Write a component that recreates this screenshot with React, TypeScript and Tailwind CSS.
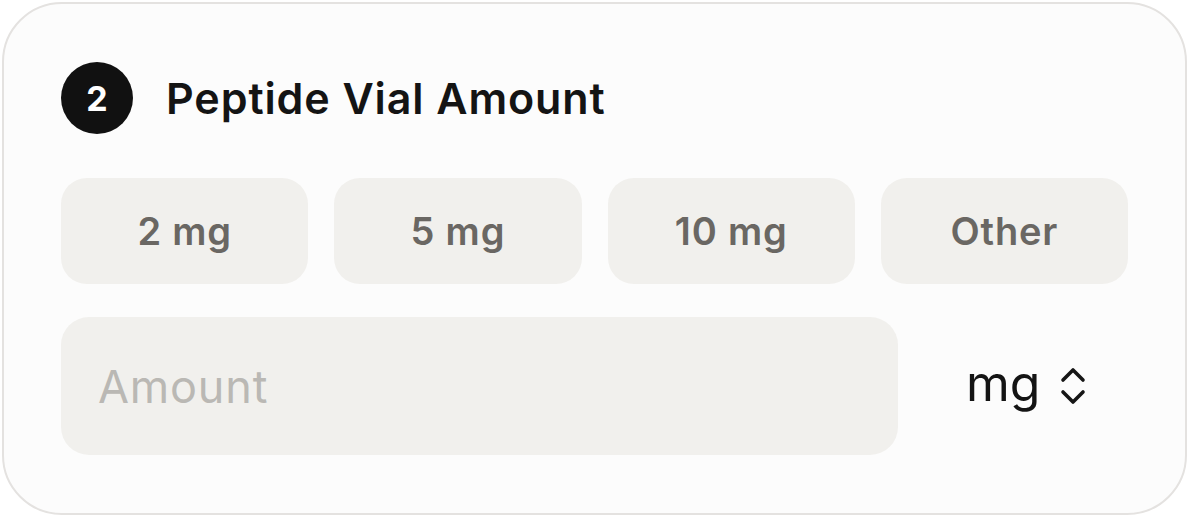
import { useState } from 'react'

const presets = ['2 mg', '5 mg', '10 mg', 'Other']

function ChevronUpDown() {
  return (
    <svg width="30" height="40" viewBox="0 0 30 40" fill="none" stroke="#161616" strokeWidth="3.6" strokeLinecap="round" strokeLinejoin="round">
      <polyline points="5 14 15 4 25 14" />
      <polyline points="5 26 15 36 25 26" />
    </svg>
  )
}

export default function App() {
  const [amount, setAmount] = useState('')

  return (
    <div className="min-h-screen bg-white p-[2px]" style={{ fontFamily: 'Inter, "Noto Sans", sans-serif' }}>
      <div className="w-[1185px] rounded-[60px] border-2 border-[#e4e2e0] bg-[#fcfcfc] px-[57px] pt-[58px] pb-[58px]">
        {/* Heading */}
        <div className="flex items-center gap-[33px] h-[72px]">
          <div className="w-[72px] h-[72px] rounded-full bg-[#111111] flex items-center justify-center text-white text-[34px] font-bold">
            2
          </div>
          <h2 className="text-[43px] font-semibold text-[#141414] tracking-[0.9px]">Peptide Vial Amount</h2>
        </div>

        {/* Presets */}
        <div className="mt-[44px] grid grid-cols-4 gap-[26px]">
          {presets.map((p) => (
            <button
              key={p}
              className="h-[106px] rounded-[26px] bg-[#f1f0ed] text-[38px] font-semibold text-[#6a6763] tracking-[0.8px]"
            >
              {p}
            </button>
          ))}
        </div>

        {/* Amount input */}
        <div className="mt-[33px] flex items-center">
          <input
            value={amount}
            onChange={(e) => setAmount(e.target.value)}
            placeholder="Amount"
            className="w-[837px] h-[138px] rounded-[28px] bg-[#f1f0ed] px-[37px] text-[45px] tracking-[0.8px] text-[#141414] placeholder:text-[#bab8b4] outline-none"
          />
          <div className="flex-1 flex items-center pl-[68px] gap-[18px]">
            <span className="text-[50px] text-[#141414] leading-none pb-[6px]">mg</span>
            <ChevronUpDown />
          </div>
        </div>
      </div>
    </div>
  )
}
